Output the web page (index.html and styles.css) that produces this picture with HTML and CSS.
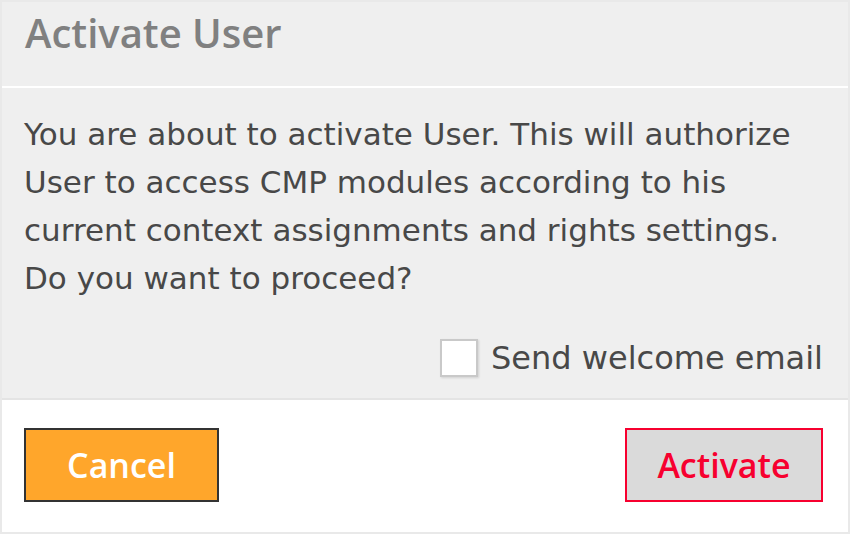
FILE: index.html
```html
<!DOCTYPE html>
<html>
<head>
<meta charset="utf-8">
<title>Activate User</title>
<link rel="stylesheet" href="styles.css">
</head>
<body>
<div class="dialog">
  <div class="dialog-header">
    <h1 class="dialog-title">Activate User</h1>
  </div>
  <div class="dialog-body">
    <p class="dialog-message">You are about to activate User. This will authorize User to access CMP modules according to his current context assignments and rights settings. Do you want to proceed?</p>
    <label class="check-row">
      <span class="checkbox"></span>
      <span class="check-label">Send welcome email</span>
    </label>
  </div>
  <div class="dialog-footer">
    <button class="btn btn-cancel">Cancel</button>
    <button class="btn btn-activate">Activate</button>
  </div>
</div>
</body>
</html>
```
FILE: styles.css
```css
* { box-sizing: border-box; }
html, body { margin: 0; padding: 0; }
body {
  width: 850px;
  height: 534px;
  background: #ffffff;
  font-family: "Open Sans", "Noto Sans", sans-serif;
}
.dialog {
  width: 850px;
  height: 534px;
  border: 2px solid #e9e9e9;
  display: flex;
  flex-direction: column;
  background: #ffffff;
}
.dialog-header {
  background: #efefef;
  height: 86px;
  flex: none;
  padding: 7px 23px 0;
  border-bottom: 2px solid #ffffff;
}
.dialog-title {
  margin: 0;
  font-family: "Open Sans", "Noto Sans", sans-serif;
  font-size: 40px;
  line-height: 48px;
  font-weight: 600;
  color: #808080;
}
.dialog-body {
  background: #efefef;
  height: 312px;
  flex: none;
  padding: 22px 25px 0 22px;
  border-bottom: 2px solid #e4e4e4;
  display: flex;
  flex-direction: column;
}
.dialog-message {
  margin: 0;
  font-family: "DejaVu Sans", "Open Sans", sans-serif;
  font-size: 31px;
  line-height: 48px;
  color: #484848;
}
.check-row {
  margin-top: 32px;
  display: flex;
  justify-content: flex-end;
  align-items: center;
  gap: 13px;
  height: 48px;
}
.checkbox {
  width: 38px;
  height: 38px;
  background: #ffffff;
  border: 2px solid #c9c9c9;
  box-shadow: 1px 1px 2px rgba(0, 0, 0, 0.12);
}
.check-label {
  font-family: "DejaVu Sans", "Open Sans", sans-serif;
  font-size: 32px;
  line-height: 48px;
  color: #484848;
}
.dialog-footer {
  flex: 1;
  background: #ffffff;
  padding: 28px 25px 0 22px;
  display: flex;
  justify-content: space-between;
  align-items: flex-start;
}
.btn {
  height: 74px;
  font-family: "Open Sans", "Noto Sans", sans-serif;
  font-size: 34px;
  font-weight: 600;
  padding: 0;
  cursor: pointer;
}
.btn-cancel {
  width: 195px;
  background: #ffa62b;
  border: 2px solid #333333;
  color: #ffffff;
}
.btn-activate {
  width: 198px;
  background: #dadada;
  border: 2px solid #f7002f;
  color: #f7002f;
}
```
